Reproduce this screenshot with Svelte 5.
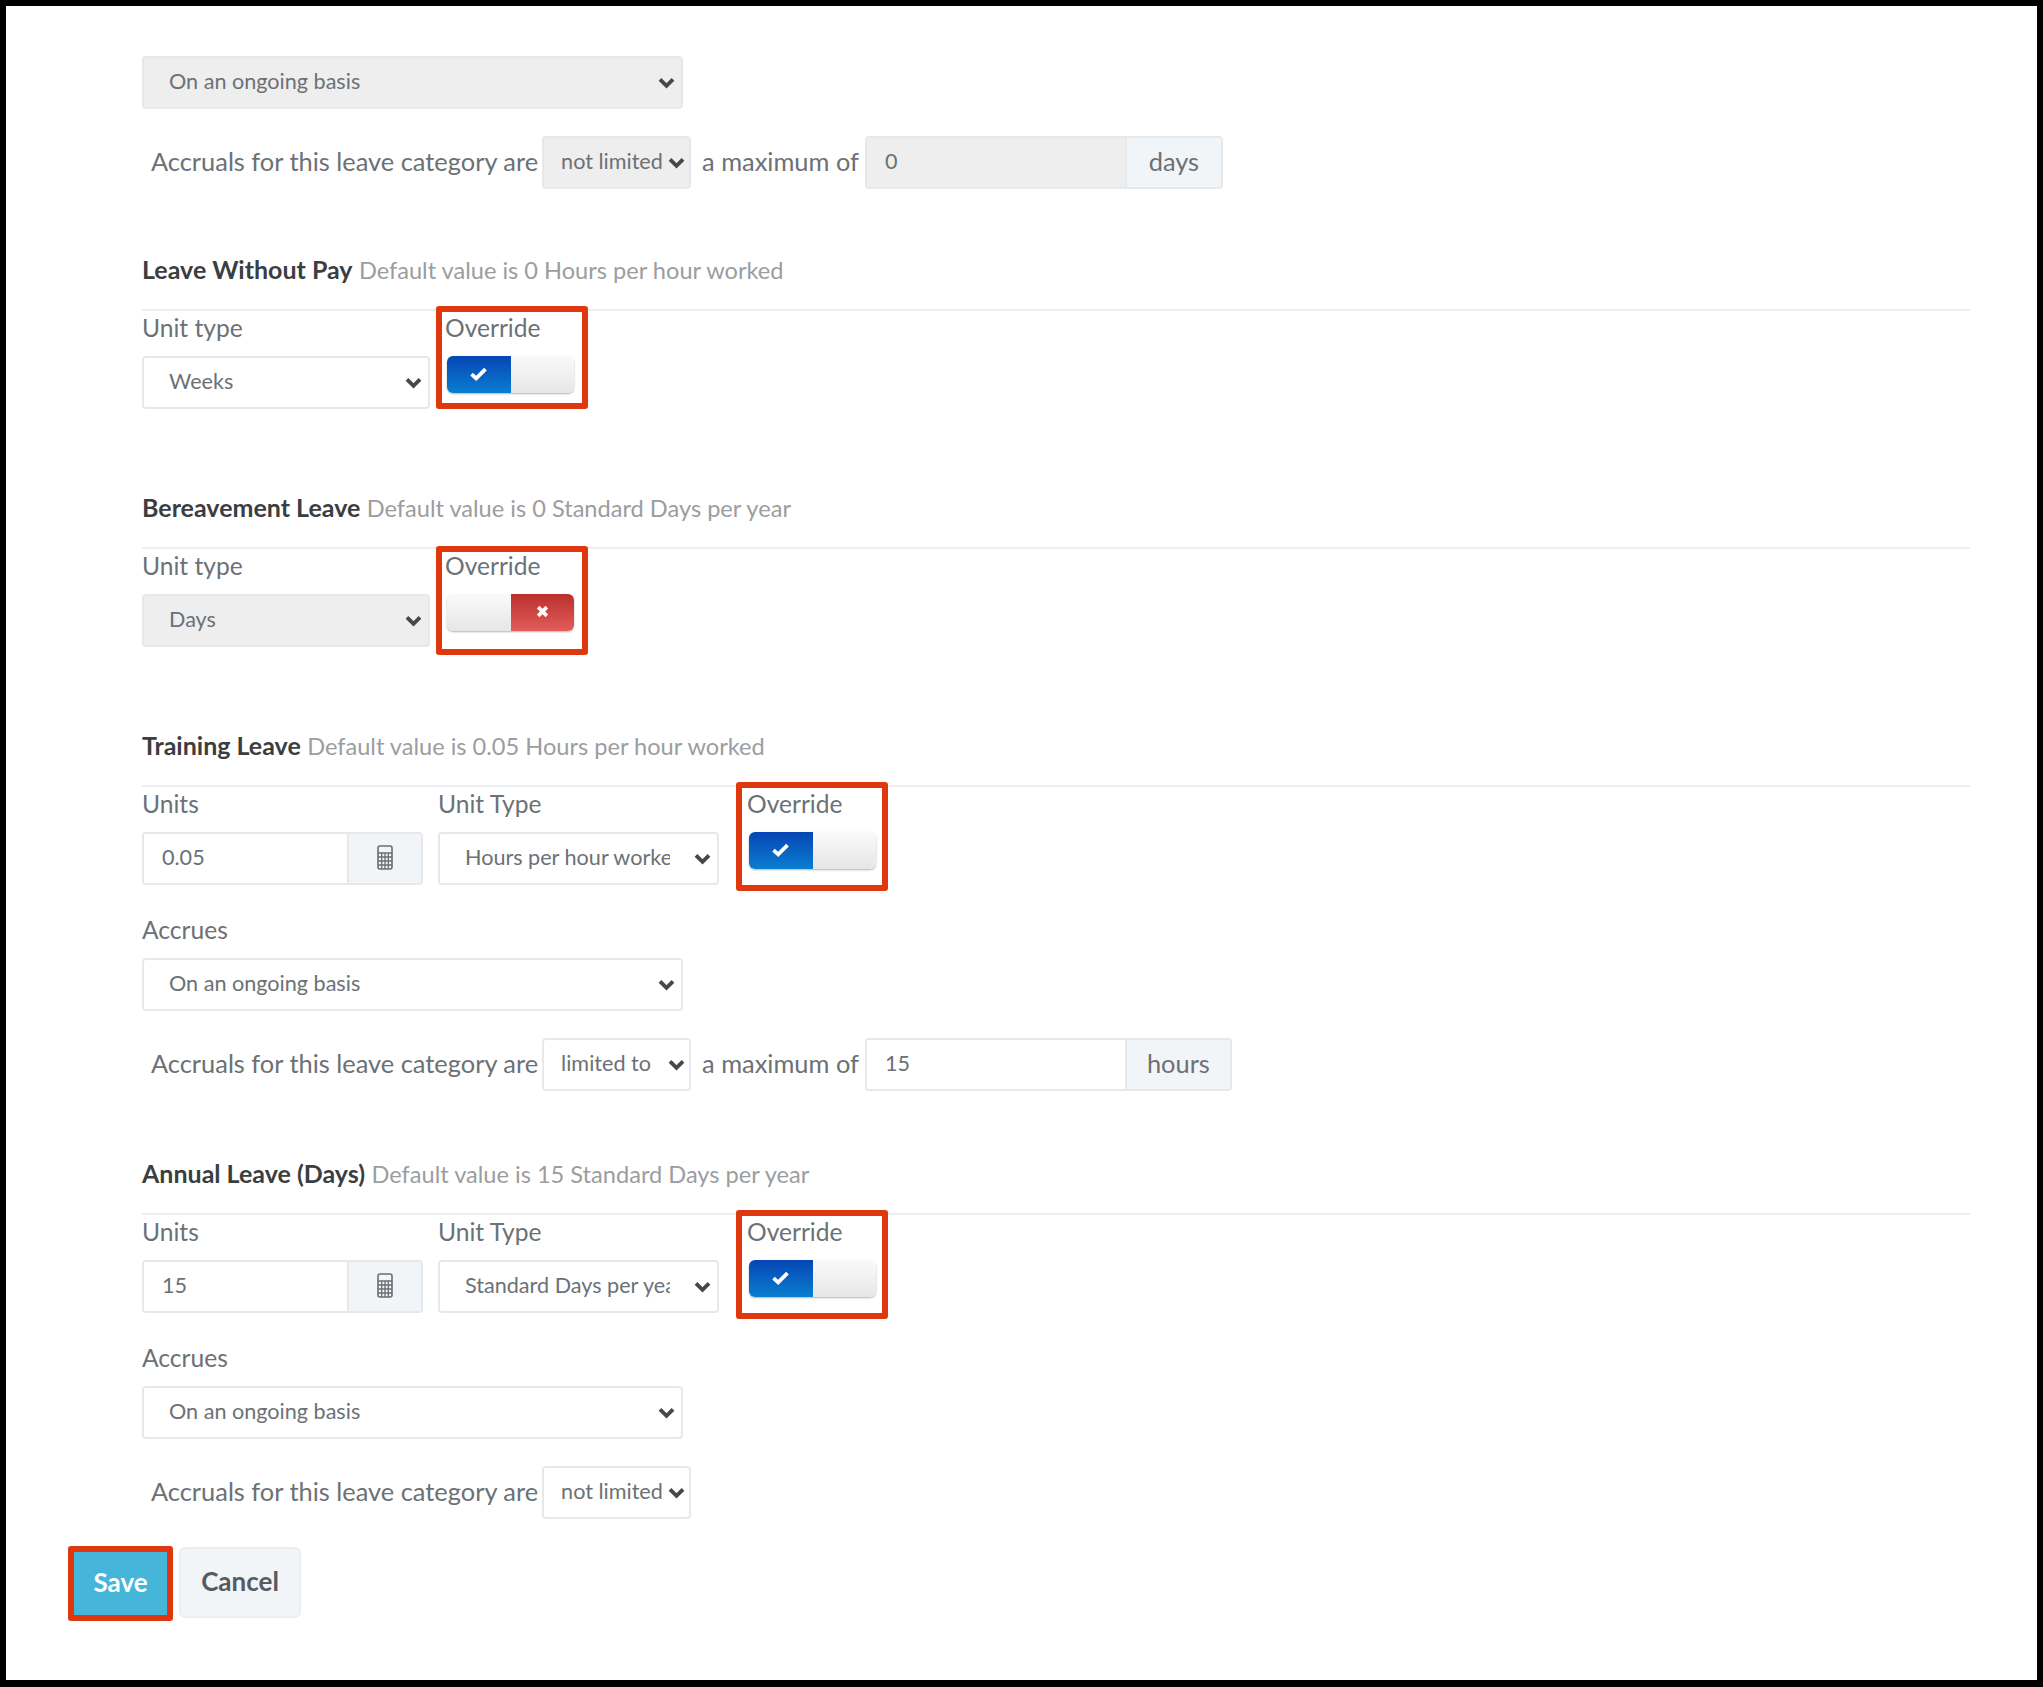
<script lang="ts">
  const ongoing = 'On an ongoing basis';
</script>

{#snippet chevron()}
  <svg class="chevron" viewBox="0 0 17 12" aria-hidden="true"><path d="M2 2.4l6.5 6.5 6.5-6.5" fill="none" stroke="#44484b" stroke-width="3.8"/></svg>
{/snippet}

{#snippet dropdown(value: string, cls: string, disabled = false)}
  <div class="select {cls}">
    <select {disabled}><option>{value}</option></select>
    {@render chevron()}
  </div>
{/snippet}

{#snippet toggle(on: boolean)}
  <div class="toggle" class:off={!on}>
    {#if on}
      <span class="side blue">
        <svg viewBox="0 0 16 12" width="19" height="14" aria-hidden="true"><path d="M2 6.2l4 3.6 8-8" fill="none" stroke="#fff" stroke-width="3.2"/></svg>
      </span>
      <span class="side blank"></span>
    {:else}
      <span class="side blank"></span>
      <span class="side red">
        <svg viewBox="0 0 12 12" width="13" height="13" aria-hidden="true"><path d="M2 2l8 8M10 2l-8 8" fill="none" stroke="#fff" stroke-width="3.4"/></svg>
      </span>
    {/if}
  </div>
{/snippet}

{#snippet override(on: boolean, markCls: string)}
  <div class="field override">
    <span class="mark {markCls}"></span>
    <span class="label">Override</span>
    {@render toggle(on)}
  </div>
{/snippet}

{#snippet heading(name: string, hint: string)}
  <h3><b>{name}</b> <span>{hint}</span></h3>
{/snippet}

{#snippet calcIcon()}
  <svg viewBox="0 0 16 25" width="16" height="25" aria-hidden="true">
    <rect x="1" y="1" width="14" height="23" rx="2" fill="none" stroke="#696e72" stroke-width="1.6"/>
    <path d="M1 8h14" stroke="#696e72" stroke-width="1.6"/>
    <path d="M1 12h14M1 16h14M1 20h14M4.7 8v16M8 8v16M11.3 8v16" stroke="#696e72" stroke-width="1.3"/>
  </svg>
{/snippet}

{#snippet unitsRow(units: string, unitType: string, markCls: string)}
  <div class="row units-row">
    <div class="field">
      <span class="label">Units</span>
      <div class="group units">
        <input value={units} />
        <span class="addon icon">{@render calcIcon()}</span>
      </div>
    </div>
    <div class="field">
      <span class="label">Unit Type</span>
      {@render dropdown(unitType, 'w281')}
    </div>
    {@render override(true, markCls)}
  </div>
{/snippet}

{#snippet accrues()}
  <div class="field accrues">
    <span class="label">Accrues</span>
    {@render dropdown(ongoing, 'wide')}
  </div>
{/snippet}

{#snippet accrualRow(state: string, value: string | null, unit: string, disabled: boolean)}
  <div class="accrual">
    <span class="text first">Accruals for this leave category are</span>
    {@render dropdown(state, 'small', disabled)}
    {#if value !== null}
      <span class="text max">a maximum of</span>
      <div class="group limit">
        <input {value} {disabled} />
        <span class="addon">{unit}</span>
      </div>
    {/if}
  </div>
{/snippet}

<div class="frame">
  <main class="panel">
    {@render dropdown(ongoing, 'wide', true)}
    {@render accrualRow('not limited', '0', 'days', true)}

    <section class="lwp">
      {@render heading('Leave Without Pay', 'Default value is 0 Hours per hour worked')}
      <div class="row">
        <div class="field">
          <span class="label">Unit type</span>
          {@render dropdown('Weeks', 'w288')}
        </div>
        {@render override(true, 'm-a')}
      </div>
    </section>

    <section class="bereave">
      {@render heading('Bereavement Leave', 'Default value is 0 Standard Days per year')}
      <div class="row">
        <div class="field">
          <span class="label">Unit type</span>
          {@render dropdown('Days', 'w288', true)}
        </div>
        {@render override(false, 'm-b')}
      </div>
    </section>

    <section class="training">
      {@render heading('Training Leave', 'Default value is 0.05 Hours per hour worked')}
      {@render unitsRow('0.05', 'Hours per hour worked', 'm-c')}
      {@render accrues()}
      {@render accrualRow('limited to', '15', 'hours', false)}
    </section>

    <section class="annual">
      {@render heading('Annual Leave (Days)', 'Default value is 15 Standard Days per year')}
      {@render unitsRow('15', 'Standard Days per year', 'm-c')}
      {@render accrues()}
      {@render accrualRow('not limited', null, '', false)}
    </section>

    <div class="actions">
      <div class="save-wrap"><button class="save">Save</button></div>
      <button class="cancel">Cancel</button>
    </div>
  </main>
</div>

<style>
  :global(body) {
    margin: 0;
    background: #000;
  }

  .frame {
    box-sizing: border-box;
    width: 2043px;
    height: 1687px;
    padding: 6px 6px 7px 6px;
    background: #000;
    font-family: Lato, "Open Sans", sans-serif;
    color: #6b7175;
  }

  .panel {
    box-sizing: border-box;
    height: 100%;
    padding: 50px 67px 0 136px;
    background: #fff;
  }

  section {
    margin-top: 61px;
  }

  .bereave {
    margin-top: 79px;
  }

  .training {
    margin-top: 79px;
  }

  .annual {
    margin-top: 63px;
  }

  h3 {
    box-sizing: border-box;
    height: 61px;
    margin: 0;
    border-bottom: 2px solid #eceeef;
    font-size: 25px;
    line-height: 39px;
    font-weight: 400;
  }

  h3 b {
    color: #3b3e41;
    font-weight: 700;
  }

  h3 span {
    color: #9b9d9f;
    font-size: 23.6px;
  }

  .row {
    display: flex;
    gap: 15px;
  }

  .units-row .override {
    margin-left: 13px;
  }

  .field {
    display: flex;
    flex-direction: column;
  }

  .label {
    height: 34px;
    margin-bottom: 11px;
    font-size: 24.6px;
    line-height: 34px;
  }

  .accrues {
    margin-top: 28px;
  }

  .select {
    position: relative;
    height: 53px;
  }

  .select select {
    box-sizing: border-box;
    width: 100%;
    height: 100%;
    margin: 0;
    padding: 0 47px 4px 25px;
    appearance: none;
    border: 2px solid #e6e8ea;
    border-radius: 4px;
    background: #fff;
    color: #6b7175;
    font: 400 21.6px Lato, sans-serif;
    opacity: 1;
  }

  .select select:disabled {
    background: #eeeeee;
    color: #6b7175;
  }

  .chevron {
    position: absolute;
    top: 21px;
    right: 8px;
    width: 17px;
    height: 12px;
  }

  .wide {
    width: 541px;
  }

  .w288 {
    width: 288px;
  }

  .w281 {
    width: 281px;
  }

  .small {
    width: 149px;
  }

  .small select {
    padding: 0 22px 4px 17px;
  }

  .small .chevron {
    right: 6px;
  }

  .accrual {
    display: flex;
    align-items: center;
    height: 53px;
    margin-top: 27px;
  }

  .text {
    padding-bottom: 3px;
    font-size: 25.4px;
  }

  .first {
    margin: 0 4px 0 9px;
  }

  .max {
    margin: 0 6px 0 11px;
  }

  .group {
    display: flex;
    box-sizing: border-box;
    height: 53px;
    border: 2px solid #e6e8ea;
    border-radius: 4px;
    overflow: hidden;
  }

  .group input {
    box-sizing: border-box;
    min-width: 0;
    height: 100%;
    padding: 0 18px 4px;
    border: 0;
    border-right: 2px solid #e6e8ea;
    outline: none;
    background: #fff;
    color: #6b7175;
    font: 400 21.6px Lato, sans-serif;
  }

  .group input:disabled {
    background: #eeeeee;
  }

  .addon {
    display: flex;
    flex: 1;
    align-items: center;
    justify-content: center;
    padding-bottom: 3px;
    background: #f2f5f8;
    font-size: 25.4px;
  }

  .units {
    width: 281px;
  }

  .units input {
    width: 205px;
  }

  .limit input {
    width: 260px;
  }

  .limit {
    min-width: 358px;
  }

  .limit .addon {
    padding: 0 20px 3px;
  }

  .override {
    position: relative;
  }

  .mark {
    position: absolute;
    left: -11px;
    width: 152px;
    box-sizing: border-box;
    border: 6px solid #e0380e;
    border-radius: 3px;
    pointer-events: none;
  }

  .m-a {
    left: -9px;
    top: -5px;
    height: 103px;
  }

  .m-b {
    left: -9px;
    top: -3px;
    height: 109px;
  }

  .m-c {
    top: -5px;
    height: 109px;
  }

  .toggle {
    display: flex;
    box-sizing: border-box;
    width: 127px;
    height: 37px;
    margin-left: 2px;
    border-radius: 6px;
    overflow: hidden;
    box-shadow: 0 1px 2px rgba(0, 0, 0, 0.3);
  }

  .side {
    display: flex;
    flex: 1;
    align-items: center;
    justify-content: center;
    padding-bottom: 2px;
  }

  .blue {
    background: linear-gradient(#0645b4, #0a7ed0);
  }

  .red {
    background: linear-gradient(#b92f2b, #e35d5b);
  }

  .blank {
    background: linear-gradient(#fafafa, #e6e6e6);
  }

  .actions {
    display: flex;
    align-items: flex-start;
    gap: 6px;
    margin: 27px 0 0 -74px;
  }

  .save-wrap {
    box-sizing: border-box;
    width: 105px;
    height: 75px;
    border: 6px solid #e0380e;
    border-radius: 3px;
  }

  button {
    font-family: Lato, sans-serif;
    font-size: 26px;
    font-weight: 700;
    border: 0;
    padding: 0 0 3px;
  }

  .save {
    width: 100%;
    height: 100%;
    background: #45b5d9;
    color: #fff;
  }

  .cancel {
    width: 122px;
    height: 71px;
    margin-top: 1px;
    border: 2px solid #eceff2;
    border-radius: 6px;
    background: #f2f5f8;
    color: #555b60;
  }
</style>
